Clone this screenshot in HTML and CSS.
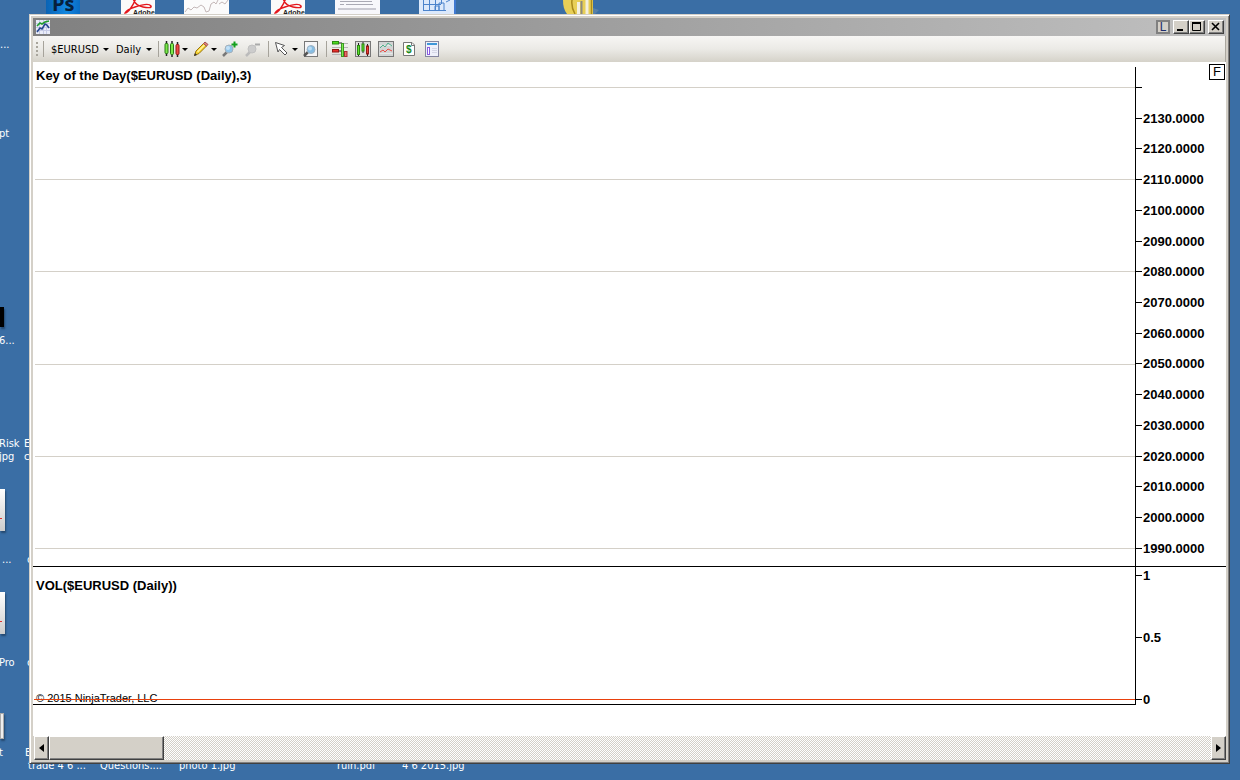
FILE: index.html
```html
<!DOCTYPE html>
<html lang="en">
<head>
  <meta charset="UTF-8">
  <meta name="viewport" content="width=device-width, initial-scale=1.0">
  <title>Chart</title>
  <link rel="stylesheet" href="styles.css">
</head>
<body>
<div class="desktop">

  <!-- shortcuts on the desktop, mostly behind the window -->
  <svg class="shortcut photoshop" width="34" height="20" viewBox="0 0 34 20">
    <defs><linearGradient id="ps" x1="0" x2="1" y1="0" y2="0"><stop offset="0" stop-color="#0a63b4"/><stop offset="0.6" stop-color="#1287e0"/><stop offset="1" stop-color="#0a6cc4"/></linearGradient></defs>
    <rect width="34" height="20" fill="url(#ps)"/>
    <text x="6" y="11" class="ps-text">Ps</text>
  </svg>
  <svg class="shortcut adobe-1" width="34" height="20" viewBox="0 0 34 20">
    <rect width="34" height="20" fill="#fafafa"/>
    <path d="M12 -2C13 3 17 6 22 7C27 8 31 8 30 6C28 3 20 5 14 7C8 9 5 11 4 13C7 13 12 6 15 -2" fill="none" stroke="#e4161c" stroke-width="1.4"/>
    <text x="12" y="15" class="adobe-text">Adobe</text>
  </svg>
  <svg class="shortcut sketch" width="45" height="20" viewBox="0 0 45 20">
    <rect width="45" height="20" fill="#fbfbfb"/>
    <path d="M1 12L4 8L7 10L10 7L13 8L17 5L20 7L22 12L25 11L27 4L30 2L32 4L34 0M35 4L38 2L41 4L44 0" fill="none" stroke="#c4b8b8"/>
  </svg>
  <svg class="shortcut adobe-2" width="34" height="20" viewBox="0 0 34 20">
    <rect width="34" height="20" fill="#fafafa"/>
    <path d="M12 -2C13 3 17 6 22 7C27 8 31 8 30 6C28 3 20 5 14 7C8 9 5 11 4 13C7 13 12 6 15 -2" fill="none" stroke="#e4161c" stroke-width="1.4"/>
    <text x="12" y="15" class="adobe-text">Adobe</text>
  </svg>
  <svg class="shortcut document" width="45" height="20" viewBox="0 0 45 20">
    <rect width="45" height="20" fill="#f7f7fb"/>
    <path d="M5 1.500H37M5 4.500H9M11 4.500H38" stroke="#a9a9b4"/>
    <path d="M3 9H41" stroke="#c9c9d2" stroke-width="2"/>
  </svg>
  <svg class="shortcut sheet" width="37" height="20" viewBox="0 0 37 20">
    <rect width="37" height="20" fill="#dce9fb"/>
    <rect x="35" width="2" height="20" fill="#3f79d0"/>
    <path d="M4 4.500H22M4 10.500H27M4.500 0V10M10.500 0V10M16.500 0V10M22.500 0V4M16 11V6H20V11M20 11V3H25V11M27 2L31 0" fill="none" stroke="#4c84cc"/>
  </svg>
  <svg class="shortcut gold" width="38" height="20" viewBox="0 0 38 20">
    <path d="M0 0H30V14H4C1 10 0 6 0 0Z" fill="#e8cf57"/>
    <path d="M9 0Q8 7 12 14M28.500 0V14" fill="none" stroke="#a88a1c" stroke-width="1.500"/>
    <path d="M15.500 2V14M24 0V14" stroke="#f4f0df" stroke-width="3"/>
    <path d="M18.500 1V14" stroke="#8d8a80" stroke-width="2"/>
    <path d="M30 8L36 10L32 14H30Z" fill="#5780a8"/>
  </svg>

  <span class="label l-dots-1">...</span>
  <span class="label l-pt">pt</span>
  <span class="label l-six">6...</span>
  <span class="label l-risk">Risk<br>jpg</span>
  <span class="label l-ec">E<br>c</span>
  <span class="label l-dots-2">...</span>
  <span class="label l-c-1">c</span>
  <span class="label l-pro">Pro</span>
  <span class="label l-c-2">c</span>
  <span class="label l-t">t</span>
  <span class="label l-e">E</span>
  <span class="label bottom l-trade">trade 4 6 ...</span>
  <span class="label bottom l-questions">Questions....</span>
  <span class="label bottom l-photo">photo 1.jpg</span>
  <span class="label bottom l-ruin">ruin.pdf</span>
  <span class="label bottom l-date">4 6 2015.jpg</span>
  <span class="tile black"></span>
  <span class="tile page-1"></span>
  <span class="tile page-2"></span>
  <span class="tile grid-page"></span>

  <div class="window">
    <div class="titlebar">
      <svg class="app-icon" width="14" height="14" viewBox="0 0 14 14">
        <rect width="14" height="14" fill="#e9ecf8"/>
        <path d="M0 3.500H14M0 7.500H14M0 10.500H14M3.500 0V14M7.500 0V14M10.500 0V14" stroke="#c6cbe6"/>
        <path d="M1 6L4 3L6 4L9 2L13 1" fill="none" stroke="#1f9d2c" stroke-width="1.600"/>
        <path d="M1 12L4 8L6 9L9 4L11 5L13 8" fill="none" stroke="#27488f" stroke-width="1.600"/>
      </svg>
      <button class="link-button" aria-label="Link">L</button>
      <div class="window-buttons">
        <button class="win-button" aria-label="Minimize"><svg width="12" height="10"><path d="M2 8H8" stroke="#000" stroke-width="2"/></svg></button>
        <button class="win-button" aria-label="Maximize"><svg width="12" height="10"><path d="M1.500 1V8.500H9.500V1" fill="none" stroke="#000"/><path d="M1 1H10" stroke="#000" stroke-width="2"/></svg></button>
      </div>
      <button class="win-button" aria-label="Close"><svg width="12" height="10"><path d="M2 1L9 8M9 1L2 8" stroke="#000" stroke-width="1.600"/></svg></button>
    </div>

    <div class="toolbar">
      <span class="grip"></span>
      <span class="separator"></span>
      <span class="combo">
        <select class="symbol" aria-label="Instrument"><option>$EURUSD</option></select>
        <i class="caret"></i>
      </span>
      <span class="combo">
        <select class="period" aria-label="Period"><option>Daily</option></select>
        <i class="caret"></i>
      </span>
      <span class="separator"></span>
      <button class="tool with-menu" aria-label="Chart style">
        <svg width="16" height="16" viewBox="0 0 16 16">
          <path d="M2.500 0V15M8 0V16M13.500 1V16" stroke="#222" stroke-width="1.500"/>
          <rect x="1" y="2.500" width="3" height="10" rx="1" fill="#7be84a" stroke="#2c7a17"/>
          <rect x="6.500" y="2.500" width="3" height="11" rx="1" fill="#7be84a" stroke="#2c7a17"/>
          <rect x="12" y="3.500" width="3" height="10" rx="1" fill="#f04a44" stroke="#931b17"/>
        </svg>
        <i class="caret"></i>
      </button>
      <button class="tool with-menu" aria-label="Draw">
        <svg width="16" height="16" viewBox="0 0 16 16">
          <path d="M1.500 14.500L3 10L10.500 2.500L13.500 5L6 12.500Z" fill="#f6d32c" stroke="#9a7412"/>
          <path d="M4.500 11L11.500 4" stroke="#fff2a0" stroke-width="1.500"/>
          <path d="M10.500 2.500L12 1L15 3.500L13.500 5Z" fill="#e8807a" stroke="#9c5550"/>
          <path d="M1 15L2 12L4 14Z" fill="#333"/>
        </svg>
        <i class="caret"></i>
      </button>
      <button class="tool" aria-label="Zoom in">
        <svg width="16" height="16" viewBox="0 0 16 16">
          <path d="M1 15L5 11" stroke="#777" stroke-width="2.500"/>
          <circle cx="7" cy="8" r="4" fill="#8fc4ea" stroke="#a4b0ba"/>
          <circle cx="6" cy="7" r="2" fill="#c2e1f7"/>
          <path d="M12.500 0.500V6.500M9.500 3.500H15.500" stroke="#14a01e" stroke-width="2"/>
        </svg>
      </button>
      <button class="tool" aria-label="Zoom out" disabled>
        <svg width="16" height="16" viewBox="0 0 16 16">
          <path d="M1 15L5 11" stroke="#bbb" stroke-width="2.500"/>
          <circle cx="7" cy="8" r="4" fill="#ccc" stroke="#c0c0c0"/>
          <path d="M10 3.500H15" stroke="#aaa" stroke-width="2"/>
        </svg>
      </button>
      <span class="separator"></span>
      <button class="tool with-menu" aria-label="Pointer">
        <svg width="16" height="16" viewBox="0 0 16 16">
          <path d="M1.500 1.500L10.500 4.500L7.500 6.500L13 12L11 14L5.500 8.500L4 11Z" fill="#fff" stroke="#555"/>
        </svg>
        <i class="caret"></i>
      </button>
      <button class="tool" aria-label="Zoom window">
        <svg width="16" height="16" viewBox="0 0 16 16">
          <rect x="1.500" y="0.500" width="13" height="15" fill="#f5f5f7" stroke="#777"/>
          <path d="M1 15L5 11" stroke="#555" stroke-width="2.500"/>
          <circle cx="8" cy="8.500" r="4" fill="#86bde4" stroke="#9fb3c2"/>
          <circle cx="7" cy="7.500" r="2" fill="#b9dcf4"/>
        </svg>
      </button>
      <span class="separator"></span>
      <button class="tool" aria-label="Chart trader">
        <svg width="16" height="16" viewBox="0 0 16 16">
          <path d="M0 6.500H9M0 13.500H9M12 2.500H16M12 6.500H16" stroke="#b4b4b4"/>
          <rect x="0.500" y="0.500" width="6" height="2.500" fill="#4fdc1e" stroke="#2b8a12"/>
          <rect x="0.500" y="8.500" width="6" height="2.500" fill="#e8302a" stroke="#8f1713"/>
          <path d="M7 2H10M7 10H10" stroke="#222"/>
          <rect x="9.500" y="2.500" width="2" height="13" fill="#7bea4e" stroke="#3a9a20"/>
          <rect x="12.500" y="10.500" width="2.500" height="5" fill="#e8706a" stroke="#a33"/>
        </svg>
      </button>
      <button class="tool" aria-label="Data series">
        <svg width="16" height="16" viewBox="0 0 16 16">
          <rect x="0.500" y="0.500" width="15" height="15" fill="#dcdcdc" stroke="#777"/>
          <path d="M3.500 2V15M8 1V12M12.500 3V15" stroke="#222"/>
          <rect x="2.500" y="4.500" width="2" height="9" fill="#5fe32e" stroke="#2b8a12"/>
          <rect x="7" y="3" width="2" height="7" fill="#5fe32e" stroke="#2b8a12"/>
          <rect x="11.500" y="5" width="2" height="8" fill="#ee3b35" stroke="#931b17"/>
        </svg>
      </button>
      <button class="tool" aria-label="Indicators">
        <svg width="16" height="16" viewBox="0 0 16 16">
          <rect x="0.500" y="0.500" width="15" height="15" fill="#d3d5d5" stroke="#777"/>
          <path d="M1.500 4.500H14.500M1.500 12.500H14.500" stroke="#e6e8e8"/>
          <path d="M2 7L5 4L7 6L10 2L14 5" fill="none" stroke="#4fb08a"/>
          <path d="M2 11L5 9L7 11L10 8L14 10" fill="none" stroke="#ea4a44"/>
        </svg>
      </button>
      <button class="tool" aria-label="Strategies">
        <svg width="16" height="16" viewBox="0 0 16 16">
          <path d="M2.500 1.500H11L13.500 4V14.500H2.500Z" fill="#fff" stroke="#777"/>
          <path d="M10.500 1.500V4.500H13.500" fill="none" stroke="#777"/>
          <text x="5" y="12" class="dollar">$</text>
        </svg>
      </button>
      <button class="tool" aria-label="Properties">
        <svg width="16" height="16" viewBox="0 0 16 16">
          <rect x="1.500" y="0.500" width="13" height="15" fill="#eef0fa" stroke="#8486a0"/>
          <rect x="3" y="2" width="10" height="2" fill="#3f97d8"/>
          <rect x="3.500" y="6.500" width="2" height="7" fill="#fff" stroke="#8a5ce0"/>
          <path d="M8 7.500H13M8 9.500H13M8 11.500H13" stroke="#d4d6e6"/>
        </svg>
      </button>
    </div>

    <div class="chart">
      <section class="panel price">
        <div class="plot">
          <h2 class="panel-title">Key of the Day($EURUSD (Daily),3)</h2>
          <div class="gridlines"><i></i><i></i><i></i><i></i><i></i><i></i></div>
        </div>
        <div class="axis">
          <ul class="ticks">
            <li></li>
            <li>2130.0000</li>
            <li>2120.0000</li>
            <li>2110.0000</li>
            <li>2100.0000</li>
            <li>2090.0000</li>
            <li>2080.0000</li>
            <li>2070.0000</li>
            <li>2060.0000</li>
            <li>2050.0000</li>
            <li>2040.0000</li>
            <li>2030.0000</li>
            <li>2020.0000</li>
            <li>2010.0000</li>
            <li>2000.0000</li>
            <li>1990.0000</li>
          </ul>
          <button class="fixed-scale" aria-label="Fixed scale">F</button>
        </div>
      </section>
      <section class="panel volume">
        <div class="plot">
          <h2 class="panel-title">VOL($EURUSD (Daily))</h2>
          <div class="copyright">© 2015 NinjaTrader, LLC</div>
          <div class="zero-line"></div>
        </div>
        <div class="axis">
          <ul class="ticks">
            <li>1</li>
            <li>0.5</li>
            <li>0</li>
          </ul>
        </div>
      </section>
    </div>

    <div class="scrollbar">
      <button class="scroll-button" aria-label="Scroll left"><svg width="5" height="8"><path d="M5 0V8L0 4Z"/></svg></button>
      <input class="scroll-track" type="range" min="0" max="100" value="0" aria-label="Scroll chart">
      <button class="scroll-button" aria-label="Scroll right"><svg width="5" height="8"><path d="M0 0V8L5 4Z"/></svg></button>
    </div>
  </div>
</div>
</body>
</html>
```
FILE: styles.css
```css
* {
  box-sizing: border-box;
}
body {
  margin: 0;
  font-family: "DejaVu Sans Condensed", "DejaVu Sans", sans-serif;
  font-size: 11px;
}
button {
  margin: 0;
  padding: 0;
  font: inherit;
  color: #000;
}
.desktop {
  position: relative;
  display: flex;
  min-height: 100vh;
  padding: 14px 10px 16px 29px;
  overflow: hidden;
  background: #3a6ea5;
}

/* Desktop shortcuts */
.shortcut,
.label,
.tile {
  position: absolute;
}
.shortcut { top: 0; }
.photoshop { left: 46px; }
.adobe-1 { left: 121px; }
.sketch { left: 184px; }
.adobe-2 { left: 271px; }
.document { left: 335px; }
.sheet { left: 419px; }
.gold { left: 563px; }
.ps-text {
  font: bold 20px "Open Sans", sans-serif;
  fill: #06203c;
}
.adobe-text {
  font: bold 7px "Liberation Sans", sans-serif;
  fill: #222;
}
.label {
  color: #fff;
  line-height: 13px;
  white-space: nowrap;
}
.l-dots-1 { left: 0; top: 38px; }
.l-pt { left: -1px; top: 127px; }
.l-six { left: -1px; top: 334px; }
.l-risk { left: -1px; top: 437px; }
.l-ec { left: 24px; top: 437px; }
.l-dots-2 { left: 2px; top: 553px; }
.l-c-1 { left: 27px; top: 553px; }
.l-pro { left: -1px; top: 656px; }
.l-c-2 { left: 27px; top: 656px; }
.l-t { left: -1px; top: 746px; }
.l-e { left: 25px; top: 746px; }
.bottom { top: 759px; }
.l-trade { left: 28px; }
.l-questions { left: 100px; }
.l-photo { left: 179px; }
.l-ruin { left: 337px; }
.l-date { left: 402px; }
.tile {
  left: 0;
  width: 5px;
  height: 42px;
  background: linear-gradient(#fff, #ccc);
  box-shadow: 1px 2px 2px #24486f;
}
.black {
  top: 307px;
  height: 20px;
  width: 4px;
  background: #000;
}
.page-1 { top: 489px; }
.page-2 { top: 592px; }
.page-1::after,
.page-2::after {
  content: "";
  display: block;
  width: 2px;
  height: 1px;
  margin-top: 29px;
  background: #d33;
}
.grid-page {
  top: 713px;
  width: 4px;
  height: 26px;
  border: 1px solid #aaa;
  background: #eee;
}

/* Window */
.window {
  position: relative;
  display: flex;
  flex: 1;
  flex-direction: column;
  padding: 3px;
  border: 1px solid;
  border-color: #d4d0c8 #404040 #404040 #d4d0c8;
  background: #d4d0c8;
  box-shadow: inset 1px 1px #fff, inset -1px -1px #808080;
}
.titlebar {
  display: flex;
  align-items: center;
  gap: 3px;
  height: 18px;
  padding: 0 2px 0 3px;
  background: linear-gradient(to right, #808080, #c0c0c0);
}
.app-icon {
  margin-right: auto;
}
.link-button {
  width: 14px;
  height: 14px;
  border: 2px solid #808080;
  background: #d4d0c8;
  color: #1c2c6c;
  font-family: "Liberation Sans", Arial, sans-serif;
  font-size: 12px;
  line-height: 10px;
}
.window-buttons {
  display: flex;
}
.win-button {
  display: flex;
  align-items: center;
  justify-content: center;
  width: 16px;
  height: 14px;
  border: 1px solid;
  border-color: #fff #404040 #404040 #fff;
  background: #d4d0c8;
  box-shadow: inset -1px -1px #808080;
}

/* Toolbar */
.toolbar {
  display: flex;
  align-items: center;
  height: 26px;
  padding-left: 3px;
  border-right: 1px solid #aaa79f;
  background: linear-gradient(#f7f6f4, #ebeae6 50%, #d5d2c9);
}
.grip {
  width: 2px;
  height: 14px;
  margin-right: 5px;
  background: repeating-linear-gradient(#a8a59c 0 2px, transparent 2px 4px);
}
.separator {
  width: 1px;
  height: 16px;
  margin-right: 5px;
  background: #a6a39b;
}
.combo {
  display: flex;
  align-items: center;
  margin: 0 5px 0 2px;
}
.combo + .separator {
  margin-left: 1px;
}
.combo select {
  padding: 0;
  border: 0;
  background: none;
  color: #000;
  font: inherit;
  appearance: none;
}
.symbol {
  width: 50px;
}
.period {
  width: 28px;
}
.caret {
  margin-left: 2px;
  border: 3px solid transparent;
  border-top-color: #000;
  border-bottom: 0;
}
.tool {
  display: flex;
  align-items: center;
  margin-right: 7px;
  border: 0;
  background: none;
}
.with-menu {
  margin-right: 5px;
}
.dollar {
  font: bold 10px "Liberation Sans", sans-serif;
  fill: #138a1c;
}

/* Chart */
.chart {
  display: flex;
  flex: 1;
  flex-direction: column;
  background: #fff;
  font-family: "Liberation Sans", Arial, sans-serif;
}
.panel {
  display: flex;
}
.price {
  flex: 1;
  border-bottom: 1px solid #000;
}
.volume {
  height: 138px;
  margin-bottom: 31px;
}
.plot {
  display: flex;
  flex: 1;
  flex-direction: column;
  padding-left: 2px;
}
.panel-title {
  margin: 0;
  padding: 6px 1px 0;
  font-size: 13px;
  line-height: 15px;
}
.gridlines {
  display: flex;
  flex: 1;
  flex-direction: column;
  justify-content: space-between;
  margin: 4px 0 17px;
}
.gridlines i {
  height: 1px;
  background: #d4d0c8;
}
.axis {
  position: relative;
  display: flex;
  width: 91px;
}
.axis::before {
  content: "";
  width: 1px;
  background: #000;
}
.price .axis::before {
  margin-top: 5px;
}
.ticks {
  display: flex;
  flex-direction: column;
  justify-content: space-between;
  margin: 0;
  padding: 18px 0 10px;
  list-style: none;
  font-size: 13px;
  font-weight: bold;
  line-height: 15px;
}
.ticks li {
  display: flex;
  align-items: center;
  height: 15px;
}
.ticks li::before {
  content: "";
  width: 6px;
  height: 1px;
  margin-right: 1px;
  background: #000;
}
.fixed-scale {
  position: absolute;
  top: 2px;
  right: 1px;
  width: 16px;
  height: 16px;
  border: 1px solid #000;
  background: #fff;
  font-size: 13px;
  line-height: 14px;
}
.volume .plot {
  border-bottom: 1px solid #000;
}
.volume .panel-title {
  padding-top: 11px;
}
.volume .ticks {
  margin-bottom: -2px;
  padding: 1px 0 0;
}
.copyright {
  margin-top: auto;
  padding-left: 1px;
  font-size: 11px;
  line-height: 13px;
}
.zero-line {
  height: 1px;
  margin: -6px 0 4px -1px;
  background: #e8400c;
}

/* Scrollbar */
.scrollbar {
  display: flex;
  height: 24px;
  padding-left: 1px;
}
.scroll-button {
  display: flex;
  align-items: center;
  justify-content: center;
  width: 15px;
  border: 1px solid;
  border-color: #fff #404040 #404040 #fff;
  background: #d4d0c8;
  box-shadow: inset -1px -1px #808080;
}
.scroll-track {
  flex: 1;
  min-width: 0;
  height: 24px;
  margin: 0;
  appearance: none;
  background: repeating-conic-gradient(#fff 0 25%, #d4d0c8 0 50%) 0 0 / 2px 2px;
}
.scroll-track::-webkit-slider-thumb {
  appearance: none;
  width: 115px;
  height: 24px;
  border: 1px solid;
  border-color: #fff #404040 #404040 #fff;
  background: #d4d0c8;
  box-shadow: inset -1px -1px #808080;
}
```
